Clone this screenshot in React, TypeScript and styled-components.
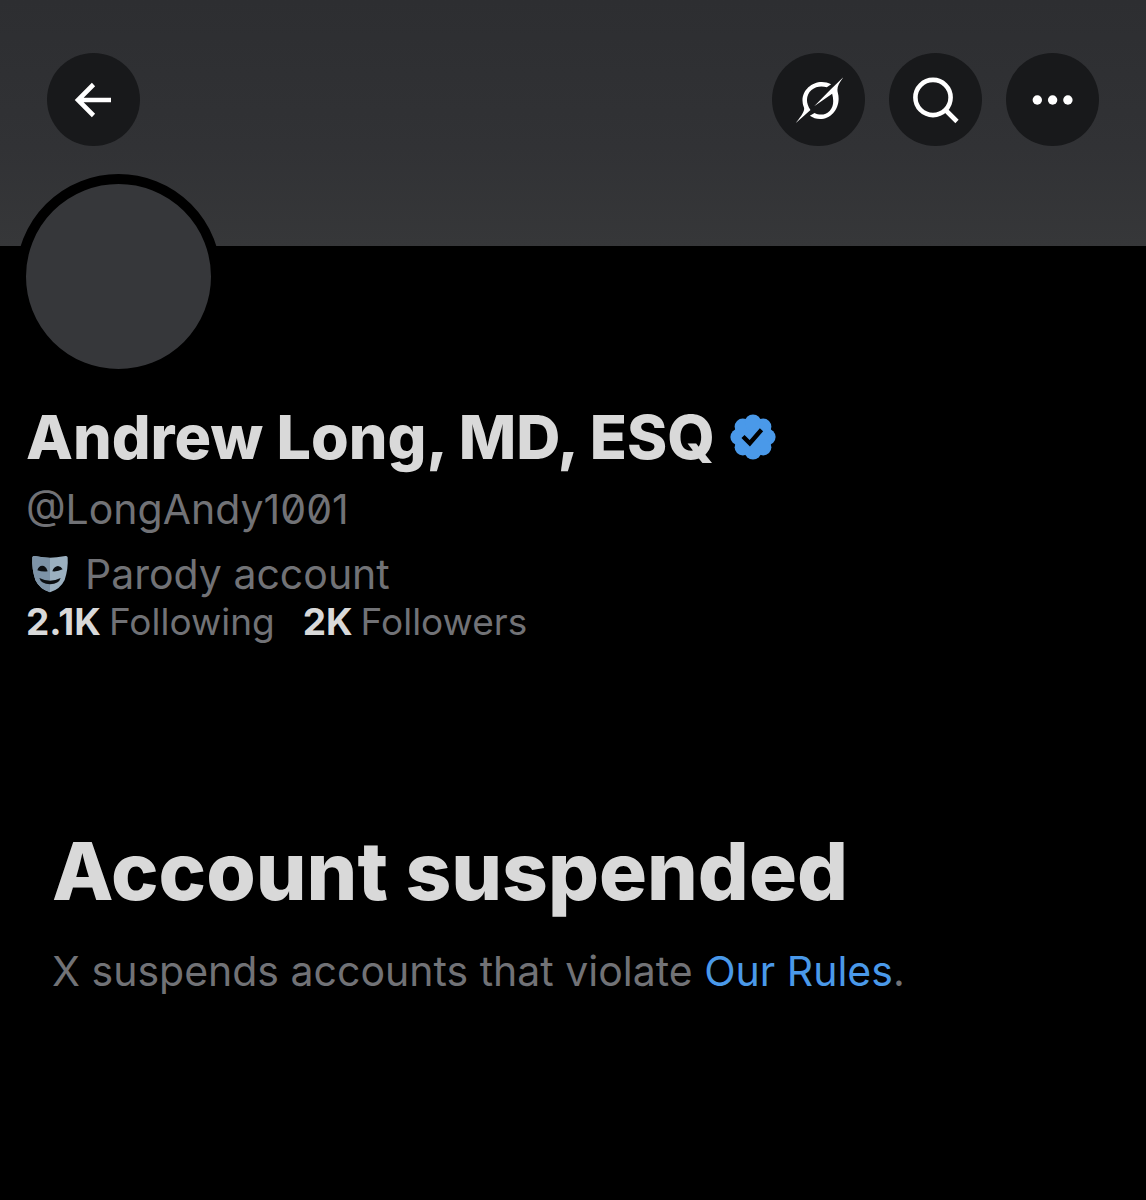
import React from 'react';
import styled, { createGlobalStyle } from 'styled-components';

const GlobalStyle = createGlobalStyle`
  * { box-sizing: border-box; }
  html, body { margin: 0; background: #000; }
  body { font-family: Inter, "Liberation Sans", sans-serif; color: #d9d9d9; }
  h1, h2, p { margin: 0; }
`;

const Page = styled.main`
  min-height: 100vh;
  background: #000;
`;

const Banner = styled.header`
  display: flex;
  justify-content: space-between;
  align-items: flex-start;
  height: 246px;
  padding: 53px 47px 0;
  background: linear-gradient(#2d2e31, #313235 60%, #363739);
`;

const Actions = styled.div`
  display: flex;
  gap: 24px;
`;

const RoundButton = styled.button`
  display: grid;
  place-items: center;
  width: 93px;
  height: 93px;
  padding: 0;
  border: 0;
  border-radius: 50%;
  background: #18191b;
  color: #fff;
  cursor: pointer;
`;

const Glyph = styled.svg`
  display: block;
  width: 48px;
  height: 48px;
`;

const Profile = styled.section`
  padding: 0 26px;
`;

const Avatar = styled.div`
  position: relative;
  width: 205px;
  height: 205px;
  margin: -72px 0 20px -10px;
  border: 10px solid #000;
  border-radius: 50%;
  background: #36373a;
`;

const NameRow = styled.div`
  display: flex;
  align-items: center;
  gap: 15px;
`;

const Name = styled.h1`
  font-size: 61px;
  line-height: 76px;
  font-weight: 800;
`;

const Badge = styled.svg`
  flex: none;
  width: 46px;
  height: 46px;
`;

const Handle = styled.p`
  margin-top: 8px;
  font-size: 41px;
  line-height: 52px;
  color: #717276;
  font-feature-settings: "zero";
`;

const Label = styled.p`
  display: flex;
  align-items: center;
  gap: 16px;
  margin-top: 13px;
  padding-left: 5px;
  font-size: 41px;
  line-height: 52px;
  color: #717276;
`;

const Mask = styled.svg`
  width: 38px;
  height: 38px;
`;

const Stats = styled.div`
  display: flex;
  gap: 28px;
`;

const Stat = styled.a`
  display: flex;
  gap: 8px;
  font-size: 37px;
  line-height: 44px;
  color: #717276;
  text-decoration: none;

  strong {
    font-weight: 700;
    color: #d9d9d9;
  }
`;

const Notice = styled.section`
  margin-top: 179px;
  padding: 0 52px;
`;

const NoticeTitle = styled.h2`
  font-size: 80px;
  line-height: 96px;
  font-weight: 800;
`;

const NoticeText = styled.p`
  margin-top: 26px;
  font-size: 41px;
  line-height: 52px;
  color: #717276;
`;

const RulesLink = styled.a`
  color: #4a99e9;
  text-decoration: none;
`;

const lobes = Array.from({ length: 8 }, (_, i) => {
  const a = (i * Math.PI) / 4;
  return { x: 23 + 14.4 * Math.cos(a), y: 23 + 14.4 * Math.sin(a) };
});

function VerifiedBadge() {
  return (
    <Badge viewBox="0 0 46 46" role="img" aria-label="Verified account">
      <g fill="#4a99e9">
        <circle cx="23" cy="23" r="19" />
        {lobes.map((p, i) => (
          <circle key={i} cx={p.x} cy={p.y} r="8.2" />
        ))}
      </g>
      <path d="M13 22.5 19.8 29.3 31.5 15.8" fill="none" stroke="#000" strokeWidth="4.4" />
    </Badge>
  );
}

export default function App() {
  return (
    <>
      <GlobalStyle />
      <Page>
        <Banner>
          <RoundButton type="button" aria-label="Back">
            <Glyph viewBox="0 0 48 48" fill="none" stroke="currentColor" strokeWidth="4.6">
              <path d="M41 24H8M23.5 8.5 8 24 23.5 39.5" />
            </Glyph>
          </RoundButton>
          <Actions>
            <RoundButton type="button" aria-label="Grok">
              <Glyph viewBox="106.5 108 144 144" fill="currentColor">
                <path d="M215 133C176 112 129 140 129 182C129 194 134 201 134 206C134 218 119 235 109 249L153 210C139 190 138 166 156 150C170 138 188 137 202 142Z" />
                <path d="M253 110C237 130 231 143 235 158C246 200 217 237 182 237C170 237 160 233 151 227L165 219C181 227 199 225 211 212C223 199 223 180 218 161L164 199L214 148Z" />
              </Glyph>
            </RoundButton>
            <RoundButton type="button" aria-label="Search">
              <Glyph viewBox="0 0 48 48" fill="none" stroke="currentColor" strokeWidth="4.6">
                <circle cx="21" cy="21.5" r="17.6" />
                <path d="M33 33.5 45 45.5" />
              </Glyph>
            </RoundButton>
            <RoundButton type="button" aria-label="More">
              <Glyph viewBox="0 0 48 48" fill="currentColor">
                <circle cx="8.3" cy="24" r="4.7" />
                <circle cx="23.6" cy="24" r="4.7" />
                <circle cx="38.9" cy="24" r="4.7" />
              </Glyph>
            </RoundButton>
          </Actions>
        </Banner>

        <Profile>
          <Avatar />
          <NameRow>
            <Name>Andrew Long, MD, ESQ</Name>
            <VerifiedBadge />
          </NameRow>
          <Handle>@LongAndy1001</Handle>
          <Label>
            <Mask viewBox="32 42 114 114" aria-hidden="true">
              <path d="M36 49Q38 43 48 46Q89 54 130 46Q140 43 142 49Q144 84 133 117Q120 144 89 154Q58 144 45 117Q34 84 36 49Z" fill="#9bb0c0" />
              <path d="M36 49Q38 43 48 46Q68 51 89 51V154Q58 144 45 117Q34 84 36 49Z" fill="#7d93a7" />
              <path d="M51 88Q56 71 71 75Q79 79 82 91Q66 93 51 88ZM96 91Q101 76 113 75Q122 76 127 85Q111 93 96 91Z" fill="#0b0e11" />
              <path d="M57 111Q89 127 121 111Q116 129 89 130Q62 129 57 111Z" fill="#0b0e11" />
            </Mask>
            Parody account
          </Label>
          <Stats>
            <Stat href="#following"><strong>2.1K</strong> <span>Following</span></Stat>
            <Stat href="#followers"><strong>2K</strong> <span>Followers</span></Stat>
          </Stats>
        </Profile>

        <Notice>
          <NoticeTitle>Account suspended</NoticeTitle>
          <NoticeText>
            X suspends accounts that violate <RulesLink href="#rules">Our Rules</RulesLink>.
          </NoticeText>
        </Notice>
      </Page>
    </>
  );
}
